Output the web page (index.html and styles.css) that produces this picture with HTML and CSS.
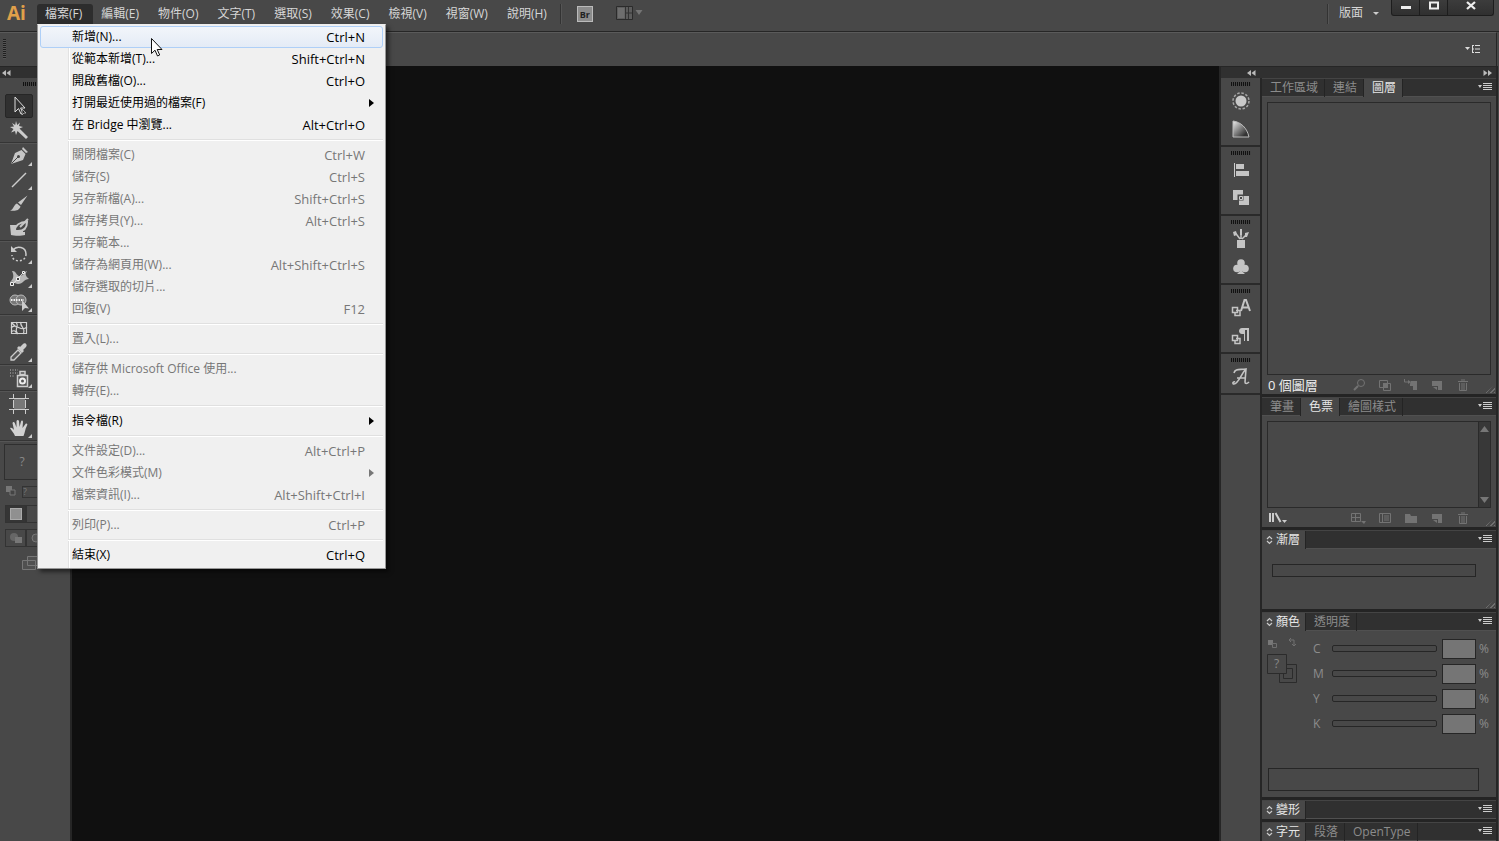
FILE: index.html
```
<!DOCTYPE html>
<html lang="zh-Hant">
<head>
  <meta charset="UTF-8">
  <meta name="viewport" content="width=device-width, initial-scale=1.0">
  <title>Ai</title>
  <link rel="stylesheet" href="styles.css">
</head>
<body>

<header class="menubar">
  <div class="logo">Ai</div>
  <nav class="menus">
    <div class="menu-wrap">
      <button class="menu open">檔案(F)</button>
      <div class="dropdown">
        <button class="item hover"><span>新增(N)...</span><kbd>Ctrl+N</kbd></button>
        <button class="item"><span>從範本新增(T)...</span><kbd>Shift+Ctrl+N</kbd></button>
        <button class="item"><span>開啟舊檔(O)...</span><kbd>Ctrl+O</kbd></button>
        <button class="item sub"><span>打開最近使用過的檔案(F)</span></button>
        <button class="item"><span>在 Bridge 中瀏覽...</span><kbd>Alt+Ctrl+O</kbd></button>
        <hr>
        <button class="item" disabled><span>關閉檔案(C)</span><kbd>Ctrl+W</kbd></button>
        <button class="item" disabled><span>儲存(S)</span><kbd>Ctrl+S</kbd></button>
        <button class="item" disabled><span>另存新檔(A)...</span><kbd>Shift+Ctrl+S</kbd></button>
        <button class="item" disabled><span>儲存拷貝(Y)...</span><kbd>Alt+Ctrl+S</kbd></button>
        <button class="item" disabled><span>另存範本...</span></button>
        <button class="item" disabled><span>儲存為網頁用(W)...</span><kbd>Alt+Shift+Ctrl+S</kbd></button>
        <button class="item" disabled><span>儲存選取的切片...</span></button>
        <button class="item" disabled><span>回復(V)</span><kbd>F12</kbd></button>
        <hr>
        <button class="item" disabled><span>置入(L)...</span></button>
        <hr>
        <button class="item" disabled><span>儲存供 Microsoft Office 使用...</span></button>
        <button class="item" disabled><span>轉存(E)...</span></button>
        <hr>
        <button class="item sub"><span>指令檔(R)</span></button>
        <hr>
        <button class="item" disabled><span>文件設定(D)...</span><kbd>Alt+Ctrl+P</kbd></button>
        <button class="item sub" disabled><span>文件色彩模式(M)</span></button>
        <button class="item" disabled><span>檔案資訊(I)...</span><kbd>Alt+Shift+Ctrl+I</kbd></button>
        <hr>
        <button class="item" disabled><span>列印(P)...</span><kbd>Ctrl+P</kbd></button>
        <hr>
        <button class="item"><span>結束(X)</span><kbd>Ctrl+Q</kbd></button>
        <svg class="cursor" width="12" height="19" viewBox="0 0 12 19"><path d="M.5 .5v15l3.500-3.300 2.500 5.800 2.200-1-2.500-5.500h4.800z" fill="#fff" stroke="#111"/></svg>
      </div>
    </div>
    <button class="menu">編輯(E)</button>
    <button class="menu">物件(O)</button>
    <button class="menu">文字(T)</button>
    <button class="menu">選取(S)</button>
    <button class="menu">效果(C)</button>
    <button class="menu">檢視(V)</button>
    <button class="menu">視窗(W)</button>
    <button class="menu">說明(H)</button>
  </nav>
  <span class="divider"></span>
  <button class="bridge">Br</button>
  <button class="arrange" aria-label="排列文件">
    <svg width="28" height="16" viewBox="0 0 28 16"><path d="M1.500 1.500h16v13h-16z" fill="#5c5c5c" stroke="#2b2b2b"/><path d="M3 3h6.500v10H3z" fill="#6e6e6e"/><path d="M10.500 2v12M11 8h6M13.500 2v12" stroke="#333" fill="none"/><path d="M20.500 5h7L24 10z" fill="#747474"/></svg>
  </button>
  <span class="divider right"></span>
  <button class="workspace">版面 <i class="caret"></i></button>
  <div class="window-buttons">
    <button aria-label="最小化"><svg width="12" height="12"><path d="M1 6h10v3H1z" fill="#eee"/></svg></button>
    <button aria-label="最大化"><svg width="12" height="12"><path d="M2 2.500h8v6H2z" fill="none" stroke="#eee" stroke-width="2"/></svg></button>
    <button class="close" aria-label="關閉"><svg width="12" height="12"><path d="M2 2l8 7M10 2L2 9" stroke="#eee" stroke-width="2.300"/></svg></button>
  </div>
</header>

<div class="control-bar">
  <span class="grip-v"></span>
  <button class="options" aria-label="選項"><svg width="15" height="10" viewBox="0 0 15 10"><path d="M0 3h5L2.500 6z" fill="#ddd"/><path d="M7 1.500h2M7 5h2M7 8.500h2M10 1.500h5M10 5h5M10 8.500h5M7.500 1v8" stroke="#ddd" fill="none"/></svg></button>
</div>

<main class="workarea">
  <aside class="toolbar">
    <div class="collapse"><svg width="9" height="6"><path d="M4 0v6L0 3zM8.500 0v6L4.500 3z" fill="#bbb"/></svg></div>
    <div class="grip"></div>
    <div class="tool-group">
      <button class="tool active" aria-label="選取"><svg viewBox="0 0 24 24"><path d="M8 3v15l3.500-3.500L14 20l2-1-2.400-5H18z" fill="#333" stroke="#ddd"/><path d="M15 15v6l2-2h2z" fill="#222" stroke="#ccc" stroke-width=".7"/></svg></button>
      <button class="tool" aria-label="魔術棒"><svg viewBox="0 0 24 24"><path d="M9 3l1.200 4L13 4.500 12 8l4 1-3.500 1.500L21 19l-2 2-8.500-8L9 17l-1-4-4 1.500L6.500 11 3 9l4-.5L5 5l3.200 2z" fill="#ccc"/></svg></button>
    </div>
    <div class="tool-group">
      <button class="tool more" aria-label="鋼筆"><svg viewBox="0 0 24 24"><path d="M16 3l5 5-2 1-4-4zM14.500 6l4 4-2.500 6L4 20 8 9z" fill="#c6c6c6"/><path d="M4.500 19.500L11 13" stroke="#444"/><circle cx="11.500" cy="12.500" r="1.500" fill="#444"/></svg></button>
      <button class="tool more" aria-label="線段"><svg viewBox="0 0 24 24"><path d="M5 19L19 5" stroke="#ccc" stroke-width="1.500"/></svg></button>
      <button class="tool" aria-label="繪圖筆刷"><svg viewBox="0 0 24 24"><path d="M20.500 3.500L14 13l-3-2.500zM10 11.500l3.500 3C12 19 8 19 3 18.500c4-1 3.500-6 7-7z" fill="#c6c6c6"/></svg></button>
      <button class="tool" aria-label="點滴筆刷"><svg viewBox="0 0 24 24"><path d="M3 9h7l-3 7h11v3c-3 1-11 1-14 0z" fill="#c6c6c6"/><path d="M4 9v10h12v-4" fill="#c6c6c6"/><path d="M8 15c0-6 5-9 12-9 0 6-3 9-9 9z" fill="#484848" stroke="#c6c6c6" stroke-width="2"/><path d="M21 3l-8 8" stroke="#c6c6c6" stroke-width="2"/></svg></button>
    </div>
    <div class="tool-group">
      <button class="tool more" aria-label="旋轉"><svg viewBox="0 0 24 24"><path d="M6 8c4-5 13-3 13 4" fill="none" stroke="#ccc" stroke-width="1.500"/><path d="M19 12c0 9-14 9-14 1" fill="none" stroke="#ccc" stroke-width="1.500" stroke-dasharray="2 2"/><path d="M4 4v6h6z" fill="#ccc"/></svg></button>
      <button class="tool more" aria-label="寬度"><svg viewBox="0 0 24 24"><path d="M5 5c4-1 4 5 8 5s3-4 7-5c-3 4 0 6 2 8-5 0-6 5-11 5-4 0-3-3-8-2 4-3 4-7 2-11z" fill="#b8b8b8"/><path d="M5 19L17 6" stroke="#eee"/><path d="M3.500 16.500h3v3h-3zM9.500 11.500h3v3h-3zM15.500 5.500h2v2h-2z" fill="#444" stroke="#eee"/></svg></button>
      <button class="tool more" aria-label="形狀建立程式"><svg viewBox="0 0 24 24"><circle cx="8" cy="10" r="5" fill="#777" stroke="#bbb"/><circle cx="14" cy="10" r="5" fill="#777" stroke="#bbb"/><path d="M4 10h13" stroke="#eee" stroke-width="2" stroke-dasharray="1.500 1"/><path d="M15 10v11l3-3 4 .5z" fill="#ccc"/></svg></button>
    </div>
    <div class="tool-group">
      <button class="tool" aria-label="網格"><svg viewBox="0 0 24 24"><path d="M4.500 6.500h15v11h-15zM4 12c5-6 10 5 16-1M9 6c4 5-3 7 2 12M14 6c-2 5 6 6 2 12M4 16c4-3 5 0 6 2M5 7l4 4" fill="none" stroke="#d2d2d2" stroke-width="1.200"/></svg></button>
      <button class="tool more" aria-label="檢色滴管"><svg viewBox="0 0 24 24"><path d="M16 4c2-2 5 1 3 3l-3 3 1 1-2 2-5-5 2-2 1 1z" fill="#ccc"/><path d="M11 10l3 3-7 7H4v-3z" fill="#555" stroke="#ccc" stroke-width="1.300"/></svg></button>
    </div>
    <div class="tool-group">
      <button class="tool more" aria-label="符號噴灑器"><svg viewBox="0 0 24 24"><path d="M10.500 9.500h10v11h-10zM13 5.500h5v3h-5z" fill="#555" stroke="#ccc" stroke-width="1.500"/><circle cx="15.500" cy="15" r="2.500" fill="none" stroke="#eee" stroke-width="2"/><path d="M3 4h8M3 7h8M3 10h5" stroke="#bbb" stroke-dasharray="1 1.500"/></svg></button>
    </div>
    <div class="tool-group">
      <button class="tool" aria-label="工作區域"><svg viewBox="0 0 24 24"><path d="M7 7h11v10H7z" fill="#777"/><path d="M2 6.500h20M2 17.500h20M6.500 2v4M18.500 2v4M6.500 18v4M18.500 18v4M6.500 8v8M18.500 8v8" stroke="#ccc"/></svg></button>
      <button class="tool more" aria-label="手形"><svg viewBox="0 0 24 24"><path d="M8 20c-1-3-4-6-5-8 1.500-1 3 .5 4 2L5.500 7C6 5.500 7.500 6 8 7.500l1.500 4L9.500 5c.5-1.500 2-1.500 2.500 0l.5 6L14 5.500c.5-1.500 2-1 2 .5L15.500 12 18.500 8c1-1 2.500 0 1.500 1.500C18 13 18 17 16.500 20z" fill="#d2d2d2"/></svg></button>
    </div>
    <div class="fill-stroke">?</div>
    <div class="mini-row"><svg width="10" height="10"><path d="M0 0h6v6H0z" fill="#777"/><path d="M4 4h5v5H4z" fill="#444" stroke="#777"/></svg><span class="mini-box">?</span></div>
    <div class="mode-row"><span class="mode on"><i></i></span><span class="mode"></span></div>
    <div class="mode-row draw"><span class="mode"><svg width="14" height="12"><circle cx="5" cy="5" r="4" fill="#666"/><path d="M6 5h7v6H6z" fill="#777"/></svg></span><span class="mode"><svg width="14" height="12"><circle cx="6" cy="6" r="4" fill="#555" stroke="#777"/></svg></span></div>
    <div class="screen-mode"><svg width="20" height="16"><path d="M5.500 1.500h14v9h-14zM.5 5.500h13v9H.5z" fill="#505050" stroke="#777"/></svg></div>
  </aside>

  <section class="canvas"></section>

  <aside class="dock">
    <div class="collapse"><svg width="9" height="6"><path d="M4 0v6L0 3zM8.500 0v6L4.500 3z" fill="#bbb"/></svg></div>
    <div class="dock-group">
      <div class="grip"></div>
      <button aria-label="色彩"><svg viewBox="0 0 20 20"><circle cx="10" cy="10" r="5.500" fill="#c8c8c8"/><circle cx="10" cy="10" r="8" fill="none" stroke="#a5a5a5" stroke-width="1.500" stroke-dasharray="2.500 1.700"/></svg></button>
      <button aria-label="色彩參考"><svg viewBox="0 0 20 20"><defs><linearGradient id="fan" x1="0" y1="0" x2="1" y2="1"><stop offset="0" stop-color="#eee"/><stop offset=".8" stop-color="#333"/></linearGradient></defs><path d="M2 18V2c8 1 14 7 16 16z" fill="url(#fan)" stroke="#bbb"/></svg></button>
    </div>
    <div class="dock-group">
      <div class="grip"></div>
      <button aria-label="對齊"><svg viewBox="0 0 20 20"><path d="M3.500 3v14" stroke="#ccc"/><path d="M5 4h8v5H5zM5 11h13v5H5z" fill="#c4c4c4"/></svg></button>
      <button aria-label="路徑管理員"><svg viewBox="0 0 20 20"><path d="M2 2h10v10H2zM8 8h10v9H8z" fill="#c4c4c4"/><path d="M6.500 6.500h6v6h-6z" fill="#4a4a4a"/><path d="M8.500 8.500h3v3h-3z" fill="#4a4a4a" stroke="#ccc"/></svg></button>
    </div>
    <div class="dock-group">
      <div class="grip"></div>
      <button aria-label="筆刷"><svg viewBox="0 0 20 20"><path d="M6 11h8v8H6z" fill="#c4c4c4"/><path d="M9 10L4.500 4M10 10V2M11 10l4-4" stroke="#c4c4c4" stroke-width="1.500"/><path d="M2 3l3-1 1 4-3 1zM9 0h2v6H9zM14 4l4-1-2 5h-2z" fill="#c4c4c4"/></svg></button>
      <button aria-label="符號"><svg viewBox="0 0 20 20"><circle cx="10" cy="6" r="3.800" fill="#c4c4c4"/><circle cx="6" cy="11.500" r="3.800" fill="#c4c4c4"/><circle cx="14" cy="11.500" r="3.800" fill="#c4c4c4"/><path d="M9 8h2v6l3 3H6l3-3z" fill="#c4c4c4"/></svg></button>
    </div>
    <div class="dock-group">
      <div class="grip"></div>
      <button aria-label="字元樣式"><svg viewBox="0 0 20 20"><path d="M1.500 9.500h5v5h-5zM5 12.500h4v5H4v-3" fill="none" stroke="#c4c4c4" stroke-width="1.500"/><path d="M10 13l3.500-11h1.500L19 13M11 9.500h6" fill="none" stroke="#c4c4c4" stroke-width="2"/></svg></button>
      <button aria-label="段落樣式"><svg viewBox="0 0 20 20"><path d="M1.500 9.500h5v5h-5zM5 12.500h4v5H4v-3" fill="none" stroke="#c4c4c4" stroke-width="1.500"/><path d="M18 2h-7c-4 0-4 6 0 6h2v7h1V4h2v11h2z" fill="#c4c4c4"/></svg></button>
    </div>
    <div class="dock-group">
      <div class="grip"></div>
      <button aria-label="字符"><svg viewBox="0 0 20 20"><path d="M3 6c1-5 6-3 12-4l-1 13c0 2 2 2 4 0M14 3C10 8 7 17 3 17c-2 0-1-3 1-2M6 11h9" fill="none" stroke="#c4c4c4" stroke-width="1.600"/></svg></button>
    </div>
  </aside>

  <aside class="panels">
    <div class="collapse end"><svg width="9" height="6"><path d="M.5 0v6l4-3zM5 0v6l4-3z" fill="#bbb"/></svg></div>

    <section class="panel layers">
      <div class="tabs"><button>工作區域</button><button>連結</button><button class="active">圖層</button><span class="panel-menu"></span></div>
      <div class="panel-body">
        <div class="list"></div>
        <footer>
          <span class="count">0 個圖層</span>
          <svg width="14" height="14"><circle cx="9" cy="5" r="3.500" fill="none" stroke="#737373"/><path d="M6 8l-4 4" stroke="#737373" stroke-width="2"/></svg>
          <svg width="14" height="14"><path d="M1.500 2.500h8v7h-8zM5.500 5.500h7v7h-7z" fill="none" stroke="#737373"/><path d="M5 5h5v5H5z" fill="#737373"/></svg>
          <svg width="14" height="14"><path d="M.5 1v3H4" fill="none" stroke="#737373"/><path d="M4 2l3 2-3 2zM7 3h6v9H9V8H6V6z" fill="#737373"/></svg>
          <svg width="14" height="14"><path d="M2 3h10v9H8V8H2z" fill="#737373"/><path d="M3 9h4v3z" fill="#737373"/></svg>
          <svg width="14" height="14"><path d="M2 3.500h10M5 2h4M3.500 5v7.500h7V5M6 5v7M8 5v7" fill="none" stroke="#737373"/></svg>
          <i class="resize"></i>
        </footer>
      </div>
    </section>

    <section class="panel">
      <div class="tabs"><button>筆畫</button><button class="active">色票</button><button>繪圖樣式</button><span class="panel-menu"></span></div>
      <div class="panel-body swatches">
        <div class="list"><div class="scrollbar"><svg width="9" height="6"><path d="M0 6h9L4.500 0z" fill="#777"/></svg><svg width="9" height="6"><path d="M0 0h9L4.500 6z" fill="#777"/></svg></div></div>
        <footer>
          <svg class="library" width="20" height="12"><path d="M2 1v9M5 1v9M7.500 1l5 9" stroke="#ccc" stroke-width="2"/><path d="M14 8h5l-2.500 3z" fill="#ccc"/></svg>
          <svg width="16" height="14"><path d="M1.500 2.500h9v8h-9zM5.500 2v9M1 6.500h10" fill="none" stroke="#737373"/><path d="M11 10h5l-2 3z" fill="#737373"/></svg>
          <svg width="14" height="14"><path d="M1.500 2.500h11v9h-11zM4.500 3v8M6 5h5M6 7h5M6 9h5" fill="none" stroke="#737373"/></svg>
          <svg width="14" height="14"><path d="M1 3h5l1 2h6v7H1z" fill="#737373"/></svg>
          <svg width="14" height="14"><path d="M2 3h10v9H8V8H2z" fill="#737373"/><path d="M3 9h4v3z" fill="#737373"/></svg>
          <svg width="14" height="14"><path d="M2 3.500h10M5 2h4M3.500 5v7.500h7V5M6 5v7M8 5v7" fill="none" stroke="#737373"/></svg>
          <i class="resize"></i>
        </footer>
      </div>
    </section>

    <section class="panel">
      <div class="tabs"><button class="active updown"><svg width="7" height="10"><path d="M1 4l2.500-2.500L6 4M1 6l2.500 2.500L6 6" fill="none" stroke="#ccc" stroke-width="1.200"/></svg>漸層</button><span class="panel-menu"></span></div>
      <div class="panel-body gradient"><div class="ramp"></div><i class="resize"></i></div>
    </section>

    <section class="panel">
      <div class="tabs"><button class="active updown"><svg width="7" height="10"><path d="M1 4l2.500-2.500L6 4M1 6l2.500 2.500L6 6" fill="none" stroke="#ccc" stroke-width="1.200"/></svg>顏色</button><button>透明度</button><span class="panel-menu"></span></div>
      <div class="panel-body color">
        <div class="color-proxy">
          <svg width="30" height="50"><path d="M1 4h5v5H1z" fill="#777"/><path d="M5.500 7.500h4v4h-4zM22 4h5v6M25 8l2 2 2-2M24 2l-2 2 2 2" fill="none" stroke="#707070"/><path d="M12.500 28.500h17v18h-17zM16.500 32.500h9v10h-9z" fill="#484848" stroke="#2b2b2b"/><path d="M.5 18.500h19v19H.5z" fill="#484848" stroke="#2b2b2b"/><text x="7" y="32" class="q">?</text></svg>
        </div>
        <div class="sliders">
          <div class="slider"><label for="c">C</label><input type="range" id="c" disabled><input type="text" aria-label="C" disabled><span>%</span></div>
          <div class="slider"><label for="m">M</label><input type="range" id="m" disabled><input type="text" aria-label="M" disabled><span>%</span></div>
          <div class="slider"><label for="y">Y</label><input type="range" id="y" disabled><input type="text" aria-label="Y" disabled><span>%</span></div>
          <div class="slider"><label for="k">K</label><input type="range" id="k" disabled><input type="text" aria-label="K" disabled><span>%</span></div>
        </div>
        <div class="spectrum"></div>
      </div>
    </section>

    <section class="panel">
      <div class="tabs"><button class="active updown"><svg width="7" height="10"><path d="M1 4l2.500-2.500L6 4M1 6l2.500 2.500L6 6" fill="none" stroke="#ccc" stroke-width="1.200"/></svg>變形</button><span class="panel-menu"></span></div>
    </section>
    <section class="panel">
      <div class="tabs"><button class="active updown"><svg width="7" height="10"><path d="M1 4l2.500-2.500L6 4M1 6l2.500 2.500L6 6" fill="none" stroke="#ccc" stroke-width="1.200"/></svg>字元</button><button>段落</button><button>OpenType</button><span class="panel-menu"></span></div>
    </section>
  </aside>
</main>

</body>
</html>
```
FILE: styles.css
```
* {
  box-sizing: border-box;
}

body {
  margin: 0;
  height: 100vh;
  display: flex;
  flex-direction: column;
  overflow: hidden;
  background: #484848;
  color: #d6d6d6;
  font-family: "Open Sans", "Noto Sans CJK TC", sans-serif;
  font-size: 12px;
  line-height: 18px;
}

button {
  margin: 0;
  padding: 0;
  border: none;
  background: none;
  color: inherit;
  font: inherit;
  white-space: nowrap;
}

svg {
  display: block;
}

/* menu bar */
.menubar {
  height: 32px;
  display: flex;
  align-items: flex-start;
  border-bottom: 1px solid #262626;
}

.logo {
  width: 37px;
  padding-left: 7px;
  color: #e0a04a;
  font: bold 19px/27px "Open Sans", sans-serif;
}

.menus {
  display: flex;
  padding-top: 4px;
}

.menu-wrap {
  position: relative;
}

.menu {
  height: 20px;
  padding: 0 11px 0 8px;
}

.menu.open {
  background: #2d2d2d;
  border-radius: 3px 3px 0 0;
}

.divider {
  width: 2px;
  height: 20px;
  margin: 4px 15px 0 2px;
  border-left: 1px solid #333;
  border-right: 1px solid #555;
}

.divider.right {
  margin: 4px 10px 0 auto;
}

.bridge {
  width: 16px;
  height: 16px;
  margin: 6px 22px 0 0;
  border: 1px solid #bbb;
  background: #8c8c8c;
  color: #222;
  font: bold 9px/13px "Open Sans", sans-serif;
}

.arrange {
  margin-top: 5px;
}

.workspace {
  display: flex;
  align-items: center;
  gap: 10px;
  margin: 4px 12px 0 0;
}

.caret {
  border: 3px solid transparent;
  border-top-color: #ccc;
  border-bottom: none;
}

.window-buttons {
  display: flex;
  height: 16px;
  margin-right: 5px;
  border: 1px solid #1d1d1d;
  border-top: none;
  border-radius: 0 0 3px 3px;
  background: linear-gradient(#3c3c3c, #303030);
}

.window-buttons button {
  width: 28px;
  display: flex;
  justify-content: center;
  border-right: 1px solid #1d1d1d;
}

.window-buttons .close {
  width: 45px;
  border-right: none;
}

/* file menu */
.dropdown {
  position: absolute;
  z-index: 10;
  left: 0;
  top: 20px;
  width: 349px;
  padding: 1px 2px 2px;
  border: 1px solid #979797;
  border-top-color: #eee;
  background: linear-gradient(90deg, #f1f1f1 30px, #e2e2e2 30px, #e2e2e2 31px, #fff 31px, #fff 32px, #f0f0f0 32px);
  box-shadow: 3px 3px 4px rgba(0, 0, 0, 0.5);
  color: #000;
}

.item {
  width: 100%;
  height: 22px;
  display: flex;
  justify-content: space-between;
  align-items: center;
  padding: 0 17px 0 31px;
  border: 1px solid transparent;
  border-radius: 3px;
}

.item.hover {
  border-color: #aecff7;
  background: linear-gradient(#f2f5fa, #e4ebf6);
}

.item:disabled {
  color: #777;
}

.item.sub {
  padding-right: 8px;
}

.item.sub::after {
  content: "";
  border: 4px solid transparent;
  border-left: 5px solid;
  border-right: none;
}

.dropdown kbd {
  font: inherit;
  font-size: 13px;
}

.dropdown hr {
  height: 2px;
  margin: 3px 0 3px 28px;
  border: none;
  border-top: 1px solid #e0e0e0;
  background: #fff;
}

.cursor {
  position: absolute;
  left: 113px;
  top: 13px;
}

/* control bar */
.control-bar {
  height: 34px;
  display: flex;
  align-items: center;
  justify-content: space-between;
  margin-right: 2px;
  padding: 0 16px 2px 3px;
  border-top: 1px solid #5a5a5a;
  border-right: 1px solid #262626;
}

.grip-v {
  width: 3px;
  height: 20px;
  background: repeating-linear-gradient(#1f1f1f 0 1px, #555 1px 2px);
}

.grip {
  height: 4px;
  background: repeating-linear-gradient(90deg, #111 0 1px, #444 1px 2px);
}

.collapse {
  height: 12px;
  display: flex;
  align-items: center;
  background: #303030;
  border-top: 1px solid #262626;
}

/* work area */
.workarea {
  flex: 1;
  min-height: 0;
  display: flex;
}

.toolbar {
  width: 72px;
  border-right: 2px solid #262626;
}

.toolbar .collapse {
  padding-left: 2px;
}

.toolbar .grip {
  width: 24px;
  margin: 4px auto 8px;
}

.tool-group {
  padding-left: 5px;
  border-bottom: 1px solid #555;
  box-shadow: inset 0 -1px #353535;
  padding-bottom: 1px;
}

.tool {
  position: relative;
  width: 28px;
  height: 24px;
  display: flex;
  justify-content: center;
  align-items: center;
}

.tool svg {
  width: 24px;
  height: 24px;
}

.tool.active {
  background: #303030;
  border: 1px solid #262626;
  border-radius: 2px;
}

.tool.more::after {
  content: "";
  position: absolute;
  right: 1px;
  bottom: 2px;
  border-left: 4px solid transparent;
  border-bottom: 4px solid #ccc;
}

.fill-stroke {
  width: 36px;
  height: 36px;
  margin: 2px 0 6px 4px;
  border: 1px solid #2f2f2f;
  color: #888;
  line-height: 34px;
  text-align: center;
}

.mini-row {
  display: flex;
  gap: 6px;
  padding-left: 6px;
  height: 13px;
}

.mini-box {
  width: 20px;
  height: 12px;
  border: 1px solid #333;
  color: #777;
  font-size: 9px;
  line-height: 10px;
}

.mode-row {
  display: flex;
  margin: 6px 0 0 5px;
}

.mode {
  width: 21px;
  height: 18px;
  display: flex;
  justify-content: center;
  align-items: center;
  border: 1px solid #333;
}

.mode.on {
  background: #353535;
}

.mode i {
  width: 12px;
  height: 12px;
  background: #909090;
  border: 1px solid #aaa;
}

.screen-mode {
  padding: 8px 0 0 22px;
}

.canvas {
  flex: 1;
  background: #101010;
}

/* icon dock */
.dock {
  width: 41px;
  border-left: 2px solid #262626;
}

.dock .collapse {
  justify-content: flex-end;
  padding-right: 4px;
}

.dock-group {
  display: flex;
  flex-direction: column;
  align-items: center;
  padding: 4px 0 2px;
  border-bottom: 2px solid #2a2a2a;
}

.dock .grip {
  width: 20px;
  margin-bottom: 1px;
}

.dock-group button {
  height: 28px;
  display: flex;
  align-items: center;
}

.dock-group svg {
  width: 20px;
  height: 20px;
}

/* panels */
.panels {
  width: 238px;
  display: flex;
  flex-direction: column;
  margin-right: 1px;
  border: solid #262626;
  border-width: 0 2px 0 2px;
}

.panels .collapse {
  justify-content: flex-end;
  padding-right: 4px;
  margin-left: -2px;
  flex-shrink: 0;
}

.panel {
  border-bottom: 3px solid #242424;
}

.panel:last-child {
  border-bottom: none;
}

.layers {
  flex: 1;
  min-height: 0;
  display: flex;
  flex-direction: column;
}

.tabs {
  height: 19px;
  display: flex;
  flex-shrink: 0;
  background: #303030;
  border-top: 1px solid #444;
  border-bottom: 1px solid #505050;
}

.tabs button {
  height: 18px;
  padding: 0 6px 0 8px;
  border-right: 1px solid #242424;
  color: #8c8c8c;
}

.tabs .active {
  background: #484848;
  color: #e6e6e6;
}

.tabs .updown {
  display: flex;
  align-items: center;
  gap: 3px;
  padding: 0 5px 0 4px;
}

.panel-menu {
  width: 14px;
  height: 8px;
  margin: 4px 4px 0 auto;
  background: linear-gradient(#ccc 1px, transparent 1px) right top / 9px 2px repeat-y;
  display: flex;
}

.panel-menu::before {
  content: "";
  height: 3px;
  margin-top: 2px;
  border: 2px solid transparent;
  border-top: 3px solid #ccc;
  border-bottom: none;
}

.panel-body {
  padding: 5px 5px 0;
}

.layers .panel-body {
  flex: 1;
  min-height: 0;
  display: flex;
  flex-direction: column;
}

.list {
  flex: 1;
  border: 1px solid #2a2a2a;
}

.panel footer {
  position: relative;
  height: 19px;
  display: flex;
  align-items: center;
  gap: 12px;
  padding: 0 21px 0 1px;
}

.panel-body .count,
.panel-body .library {
  margin-right: auto;
  color: #eee;
  font-size: 13px;
}

.resize {
  position: absolute;
  right: -4px;
  bottom: 1px;
  width: 10px;
  height: 8px;
  background: repeating-linear-gradient(135deg, #707070 0 1px, transparent 1px 3px);
  clip-path: polygon(100% 0, 100% 100%, 0 100%);
}

.swatches .list {
  height: 87px;
  display: flex;
  justify-content: flex-end;
}

.scrollbar {
  width: 12px;
  padding: 4px 1px;
  display: flex;
  flex-direction: column;
  justify-content: space-between;
  background: #383838;
  border-left: 1px solid #2a2a2a;
}

.gradient {
  position: relative;
  height: 60px;
  padding: 15px 20px 0 10px;
}

.gradient .resize {
  right: 1px;
}

.ramp {
  height: 13px;
  border: 1px solid #262626;
}

.color {
  height: 166px;
  display: grid;
  grid-template-columns: 46px minmax(0, 1fr);
  grid-template-rows: 100px 1fr;
}

.q {
  fill: #888;
  font-size: 12px;
}

.slider {
  height: 25px;
  display: flex;
  align-items: center;
  color: #8c8c8c;
}

.slider label {
  width: 19px;
}

.slider input {
  margin: 0;
  appearance: none;
  border: 1px solid #262626;
}

.slider input[type=range] {
  flex: 1;
  min-width: 0;
  height: 7px;
  background: #484848;
  border-radius: 2px;
}

.slider input[type=range]::-webkit-slider-thumb {
  appearance: none;
  width: 0;
  height: 0;
}

.slider input[type=text] {
  width: 34px;
  height: 20px;
  margin: 0 3px 0 5px;
  background: #757575;
}

.slider span {
  width: 12px;
}

.spectrum {
  grid-column: 1 / 3;
  height: 23px;
  margin: 32px 12px 0 1px;
  border: 1px solid #262626;
}
```
